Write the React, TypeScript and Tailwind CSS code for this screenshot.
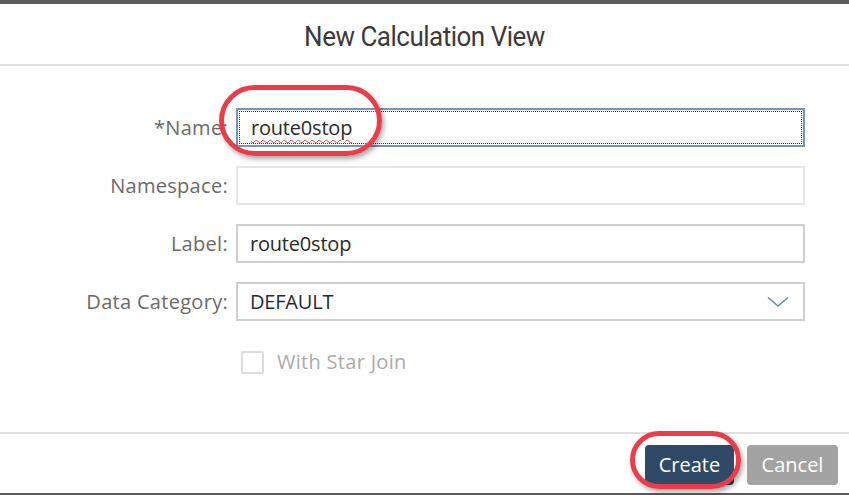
const Field = ({
  label,
  children,
}: {
  label: string;
  children: React.ReactNode;
}) => (
  <div className="flex items-center h-[39px]">
    <div className="w-[229px] pr-[1px] text-right text-[20px] tracking-[0.3px] text-[#6a6a6a]">
      {label}
    </div>
    <div className="ml-[7px] w-[569px] h-full">{children}</div>
  </div>
);

const App = () => {
  return (
    <div
      className="relative w-[849px] h-[495px] bg-white flex flex-col overflow-hidden"
      style={{ fontFamily: '"Open Sans", "Liberation Sans", sans-serif' }}
    >
      {/* ===== Top frame ===== */}
      <div className="h-[4px] bg-[#5a5a5a] shrink-0" />

      {/* ===== Header ===== */}
      <div className="h-[62px] shrink-0 flex items-center justify-center border-b-2 border-[#e0e0e0]">
        <h2
          className="text-[26px] text-[#3a3a3a] tracking-[-0.5px] mt-[6px] scale-y-[1.05]"
          style={{ fontFamily: '"Liberation Sans Narrow", Roboto, sans-serif' }}
        >
          New Calculation View
        </h2>
      </div>

      {/* ===== Form ===== */}
      <div className="flex-1 flex flex-col pt-[42px] gap-[19px]">
        <Field label="*Name:">
          <div className="h-full border-2 border-[#7494b8] p-[1px]">
            <div className="h-full border border-dotted border-[#333] flex items-center pl-[11px] text-[20px] tracking-[-0.2px] text-[#2a2a2a]">
              <span className="underline decoration-wavy decoration-[#e04848] decoration-1 underline-offset-4">
                route0stop
              </span>
            </div>
          </div>
        </Field>

        <Field label="Namespace:">
          <div className="h-full border-2 border-[#e6e6e6]" />
        </Field>

        <Field label="Label:">
          <div className="h-full border-2 border-[#cfcfcf] flex items-center pl-[12px] text-[20px] tracking-[-0.2px] text-[#2a2a2a]">
            route0stop
          </div>
        </Field>

        <Field label="Data Category:">
          <div className="h-full border-2 border-[#cfcfcf] flex items-center justify-between pl-[12px] pr-[14px] text-[20px] tracking-[-0.2px] text-[#1e2a3a]">
            <span>DEFAULT</span>
            <svg width="22" height="12" viewBox="0 0 22 12" fill="none">
              <path d="M1 1.5 L11 10 L21 1.5" stroke="#6a88aa" strokeWidth="1.5" />
            </svg>
          </div>
        </Field>

        <div className="flex items-center ml-[241px] mt-[7px] gap-[13px]">
          <div className="w-[23px] h-[23px] border-2 border-[#dcdcdc] rounded-[2px]" />
          <span className="text-[20px] tracking-[0.3px] text-[#ababab]">With Star Join</span>
        </div>
      </div>

      {/* ===== Footer ===== */}
      <div className="h-[61px] shrink-0 border-t-2 border-[#e0e0e0] flex items-center justify-end gap-[13px] pr-[11px]">
        <button className="w-[89px] h-[40px] rounded-[4px] bg-[#2e4a66] text-white text-[20px] mt-[2px]">
          Create
        </button>
        <button className="w-[91px] h-[40px] rounded-[4px] bg-[#a3a3a3] text-white text-[20px] mt-[2px]">
          Cancel
        </button>
      </div>

      {/* ===== Bottom frame ===== */}
      <div className="h-[2px] bg-[#5a5a5a] shrink-0" />

      {/* ===== Annotations ===== */}
      <div className="absolute left-[219px] top-[85px] w-[163px] h-[71px] rounded-[36px] border-[5px] border-[#ea3d4a] shadow-[2px_3px_5px_rgba(0,0,0,0.35)]" />
      <div className="absolute left-[630px] top-[431px] w-[111px] h-[58px] rounded-[30px] border-[5px] border-[#ea3d4a] shadow-[2px_3px_5px_rgba(0,0,0,0.35)]" />
    </div>
  );
};

export default App;
